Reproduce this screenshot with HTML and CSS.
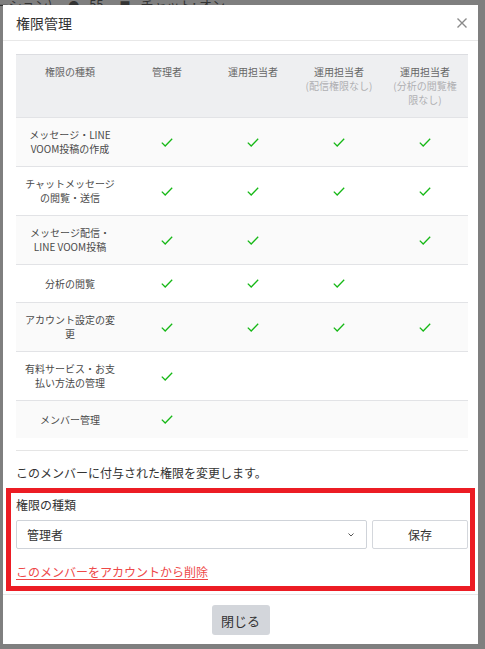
FILE: index.html
```html
<!DOCTYPE html>
<html lang="ja">
<head>
<meta charset="utf-8">
<title>権限管理</title>
<link rel="stylesheet" href="styles.css">
</head>
<body>
<div class="behind">
  <span class="behind-item">ーション)</span>
  <span class="behind-item behind-icon">&#9679;</span>
  <span class="behind-item">55</span>
  <span class="behind-item behind-icon">&#9632;</span>
  <span class="behind-item">チャット: オン</span>
</div>

<div class="modal">
  <div class="modal-header">
    <h1 class="modal-title">権限管理</h1>
    <button class="close-btn" aria-label="閉じる">
      <svg width="10" height="10" viewBox="0 0 10 10"><path d="M0.5 0.5 L9.5 9.5 M9.5 0.5 L0.5 9.5" stroke="#8a8a8a" stroke-width="1.4" fill="none"/></svg>
    </button>
  </div>

  <div class="modal-body">
    <table class="perm-table">
      <colgroup>
        <col class="col-label"><col class="col-role"><col class="col-role"><col class="col-role"><col class="col-role">
      </colgroup>
      <thead>
        <tr>
          <th>権限の種類</th>
          <th>管理者</th>
          <th>運用担当者</th>
          <th>運用担当者<br><span class="sub">(配信権限なし)</span></th>
          <th>運用担当者<br><span class="sub">(分析の閲覧権<br>限なし)</span></th>
        </tr>
      </thead>
      <tbody>
        <tr class="alt">
          <td class="label">メッセージ・LINE<br>VOOM投稿の作成</td>
          <td><span class="check"></span></td>
          <td><span class="check"></span></td>
          <td><span class="check"></span></td>
          <td><span class="check"></span></td>
        </tr>
        <tr>
          <td class="label">チャットメッセージ<br>の閲覧・送信</td>
          <td><span class="check"></span></td>
          <td><span class="check"></span></td>
          <td><span class="check"></span></td>
          <td><span class="check"></span></td>
        </tr>
        <tr class="alt">
          <td class="label">メッセージ配信・<br>LINE VOOM投稿</td>
          <td><span class="check"></span></td>
          <td><span class="check"></span></td>
          <td></td>
          <td><span class="check"></span></td>
        </tr>
        <tr>
          <td class="label">分析の閲覧</td>
          <td><span class="check"></span></td>
          <td><span class="check"></span></td>
          <td><span class="check"></span></td>
          <td></td>
        </tr>
        <tr class="alt">
          <td class="label">アカウント設定の変<br>更</td>
          <td><span class="check"></span></td>
          <td><span class="check"></span></td>
          <td><span class="check"></span></td>
          <td><span class="check"></span></td>
        </tr>
        <tr>
          <td class="label">有料サービス・お支<br>払い方法の管理</td>
          <td><span class="check"></span></td>
          <td></td>
          <td></td>
          <td></td>
        </tr>
        <tr class="alt">
          <td class="label">メンバー管理</td>
          <td><span class="check"></span></td>
          <td></td>
          <td></td>
          <td></td>
        </tr>
      </tbody>
    </table>

    <hr class="divider">

    <p class="desc">このメンバーに付与された権限を変更します。</p>

    <div class="field-label">権限の種類</div>
    <div class="field-row">
      <div class="select">
        <span class="select-value">管理者</span>
        <svg class="chevron" width="6" height="4" viewBox="0 0 6 4"><path d="M0.5 0.5 L3 3 L5.5 0.5" stroke="#555" stroke-width="1" fill="none"/></svg>
      </div>
      <button class="save-btn">保存</button>
    </div>

    <a class="delete-link" href="#">このメンバーをアカウントから削除</a>
  </div>

  <div class="modal-footer">
    <button class="close-footer-btn">閉じる</button>
  </div>

  <div class="highlight"></div>
</div>
</body>
</html>
```

FILE: styles.css
```css
* { box-sizing: border-box; }

html, body {
  margin: 0;
  padding: 0;
}

body {
  width: 485px;
  height: 649px;
  background: #7f7f7f;
  font-family: "Noto Sans CJK JP", "Noto Sans", sans-serif;
  color: #333;
  overflow: hidden;
}

.behind {
  display: flex;
  gap: 10px;
  font-size: 13px;
  line-height: 10px;
  color: #333;
  white-space: nowrap;
  margin-left: -4px;
}

.behind-icon {
  font-size: 11px;
  margin-left: 6px;
}

.modal {
  position: fixed;
  top: 5px;
  left: 3px;
  width: 475px;
  background: #fff;
}

.modal-header {
  height: 36px;
  display: flex;
  align-items: center;
  justify-content: space-between;
  padding: 0 11px 0 13px;
  border-bottom: 1px solid #e8e8e8;
}

.modal-title {
  margin: 0;
  font-size: 14px;
  font-weight: normal;
  line-height: 20px;
  color: #333;
}

.close-btn {
  border: 0;
  background: none;
  padding: 0;
  width: 10px;
  height: 10px;
  display: block;
  margin-top: 1px;
}

.close-btn svg { display: block; }

.modal-body {
  padding: 13px 10px 12px 13px;
}

.perm-table {
  width: 452px;
  border-collapse: collapse;
  table-layout: fixed;
  font-size: 10px;
  line-height: 14px;
}

.col-label { width: 108px; }
.col-role { width: 86px; }

.perm-table th {
  background: #eeeff1;
  border-top: 1px solid #dcdde1;
  font-weight: normal;
  color: #666;
  vertical-align: top;
  text-align: center;
  padding: 10px 2px;
}

.perm-table .sub {
  color: #b0b0b3;
}

.perm-table td {
  border-top: 1px solid #e2e3e6;
  text-align: center;
  vertical-align: middle;
  padding: 10px 2px;
  color: #555;
}

.perm-table tr.alt td { background: #fafafa; }

.perm-table td.label { color: #4a4a4a; }

.check {
  display: block;
  width: 12px;
  height: 17px;
  margin: 0 auto;
  background: url("data:image/svg+xml;utf8,<svg xmlns='http://www.w3.org/2000/svg' width='12' height='17' viewBox='0 0 12 17'><polyline points='0.8,8.6 4.2,12 11.2,4.8' fill='none' stroke='%2316b816' stroke-width='1.3'/></svg>") no-repeat center;
}

.divider {
  border: 0;
  border-top: 1px solid #e5e5e5;
  margin: 12px 0 0;
  height: 0;
}

.desc {
  margin: 13px 0 0;
  font-size: 12px;
  line-height: 18px;
  color: #333;
}

.field-label {
  margin-top: 14px;
  font-size: 12px;
  line-height: 18px;
  color: #333;
}

.field-row {
  margin-top: 6px;
  display: flex;
  gap: 5px;
}

.select {
  flex: 0 0 351px;
  height: 29px;
  border: 1px solid #cfd3d9;
  border-radius: 2px;
  display: flex;
  align-items: center;
  justify-content: space-between;
  padding: 0 12px 0 10px;
  font-size: 12px;
  color: #333;
}

.chevron { display: block; }

.save-btn {
  flex: 0 0 96px;
  height: 29px;
  border: 1px solid #d4d7dc;
  border-radius: 2px;
  background: #fff;
  font-family: inherit;
  font-size: 12px;
  color: #333;
  padding: 0;
}

.delete-link {
  display: inline-block;
  margin-top: 14px;
  font-size: 12px;
  line-height: 18px;
  color: #ee4848;
  text-decoration: underline;
  text-underline-offset: 2px;
}

.modal-footer {
  border-top: 1px solid #e8e8e8;
  padding: 10px 0 9px;
  display: flex;
  justify-content: center;
}

.close-footer-btn {
  width: 58px;
  height: 30px;
  border: 0;
  border-radius: 3px;
  background: #d3d6db;
  font-family: inherit;
  font-size: 13px;
  color: #333;
  padding: 0;
}

.highlight {
  position: absolute;
  left: 3px;
  top: 483px;
  width: 469px;
  height: 103px;
  border: 5px solid #ec1c24;
  pointer-events: none;
}
```
